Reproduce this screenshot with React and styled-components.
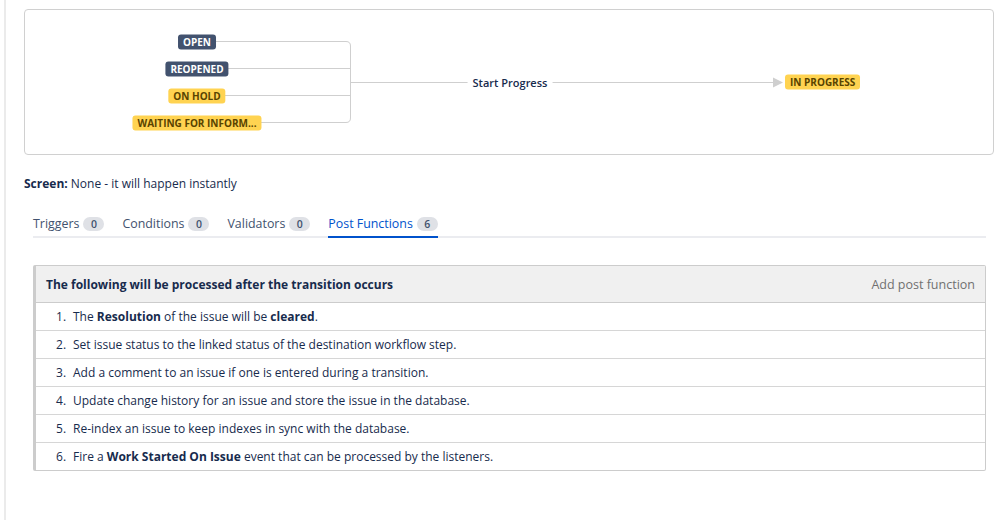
import React from 'react';
import styled, { createGlobalStyle } from 'styled-components';

const GlobalStyle = createGlobalStyle`
  html, body {
    margin: 0;
    padding: 0;
    background: #fff;
  }
  body {
    font-family: "Open Sans", "Noto Sans", sans-serif;
    font-size: 12px;
    color: #172b4d;
  }
`;

const Page = styled.div`
  margin-left: 4px;
  border-left: 2px solid #ebebeb;
  min-height: 520px;
  box-sizing: border-box;
  padding: 9px 5px 0 18px;
`;

const DiagramBox = styled.div`
  position: relative;
  width: 970px;
  height: 146px;
  box-sizing: border-box;
  border: 1px solid #d0d0d0;
  border-radius: 4px;
`;

const Lines = styled.svg`
  position: absolute;
  left: 0;
  top: 0;
`;

const Lozenge = styled.span`
  position: absolute;
  left: ${(p) => p.$x}px;
  top: ${(p) => p.$y}px;
  transform: ${(p) => (p.$center ? 'translate(-50%, -50%)' : 'translateY(-50%)')};
  display: inline-block;
  padding: 0 5px;
  height: 15px;
  line-height: 15px;
  border-radius: 3px;
  font-size: 10px;
  font-weight: 700;
  white-space: nowrap;
  background: ${(p) => (p.$tone === 'blue' ? '#42526e' : '#ffd351')};
  color: ${(p) => (p.$tone === 'blue' ? '#fff' : '#594300')};
`;

const EdgeLabel = styled.span`
  position: absolute;
  left: ${(p) => p.$x}px;
  top: ${(p) => p.$y}px;
  transform: translate(-50%, -50%);
  background: #fff;
  padding: 0 5px;
  font-size: 11px;
  font-weight: 600;
  color: #172b4d;
  white-space: nowrap;
`;

const ScreenLine = styled.p`
  margin: 21px 0 0;
  font-size: 12px;
  line-height: 16px;
  b {
    font-weight: 700;
  }
`;

const TabBar = styled.div`
  display: flex;
  gap: 18px;
  margin: 23px 0 0 9px;
  width: 953px;
  border-bottom: 2px solid #ebecf0;
`;

const Tab = styled.div`
  display: flex;
  align-items: center;
  gap: 4px;
  padding: 0 0 4px;
  margin-bottom: -2px;
  font-size: 12.4px;
  color: ${(p) => (p.$active ? '#0052cc' : '#42526e')};
  border-bottom: 2px solid ${(p) => (p.$active ? '#0052cc' : 'transparent')};
`;

const Count = styled.span`
  display: inline-block;
  min-width: 21px;
  height: 14px;
  line-height: 14px;
  text-align: center;
  border-radius: 7px;
  background: #dfe1e6;
  color: #42526e;
  font-size: 10.5px;
  font-weight: 600;
`;

const Panel = styled.section`
  margin: 27px 0 0 9px;
  width: 953px;
  box-sizing: border-box;
  border: 1px solid #cccccc;
  border-left: 3px solid #cccccc;
  border-radius: 2px;
`;

const PanelHeader = styled.div`
  display: flex;
  align-items: center;
  justify-content: space-between;
  height: 36px;
  padding: 0 10px 0 10px;
  background: #f0f0f0;
  border-bottom: 1px solid #cccccc;
`;

const PanelTitle = styled.h3`
  margin: 0;
  font-size: 12px;
  font-weight: 700;
  color: #172b4d;
`;

const AddLink = styled.span`
  font-size: 12.5px;
  color: #707070;
`;

const StepList = styled.ol`
  list-style: none;
  margin: 0;
  padding: 0;
`;

const Step = styled.li`
  display: flex;
  align-items: center;
  height: 27px;
  padding-left: 20px;
  border-top: ${(p) => (p.$first ? 'none' : '1px solid #d6d6d6')};
  font-size: 12px;
  color: #172b4d;
  b {
    font-weight: 700;
  }
`;

const StepNo = styled.span`
  width: 17px;
  flex: none;
`;

const sources = [
  { label: 'OPEN', tone: 'blue', y: 31 },
  { label: 'REOPENED', tone: 'blue', y: 58 },
  { label: 'ON HOLD', tone: 'yellow', y: 85 },
  { label: 'WAITING FOR INFORM...', tone: 'yellow', y: 112 },
];

const steps = [
  <>The <b>Resolution</b> of the issue will be <b>cleared</b>.</>,
  <>Set issue status to the linked status of the destination workflow step.</>,
  <>Add a comment to an issue if one is entered during a transition.</>,
  <>Update change history for an issue and store the issue in the database.</>,
  <>Re-index an issue to keep indexes in sync with the database.</>,
  <>Fire a <b>Work Started On Issue</b> event that can be processed by the listeners.</>,
];

const tabs = [
  { name: 'Triggers', count: 0 },
  { name: 'Conditions', count: 0 },
  { name: 'Validators', count: 0 },
  { name: 'Post Functions', count: 6, active: true },
];

export default function App() {
  return (
    <>
      <GlobalStyle />
      <Page>
        <DiagramBox>
          <Lines width="968" height="144" viewBox="0 0 968 144">
            <g fill="none" stroke="#cfcfcf" strokeWidth="1">
              <path d="M172 31.5 H321 Q325.5 31.5 325.5 36 V108 Q325.5 112.5 321 112.5 H172" />
              <path d="M172 58.5 H325.5" />
              <path d="M172 85.5 H325.5" />
              <path d="M325.5 72.5 H750" />
            </g>
            <polygon points="748,67.5 758,72.5 748,77.5" fill="#cfcfcf" />
          </Lines>
          {sources.map((s) => (
            <Lozenge key={s.label} $tone={s.tone} $x={172} $y={s.y + 0.5} $center>
              {s.label}
            </Lozenge>
          ))}
          <EdgeLabel $x={485} $y={72}>Start Progress</EdgeLabel>
          <Lozenge $tone="yellow" $x={760} $y={72}>IN PROGRESS</Lozenge>
        </DiagramBox>

        <ScreenLine>
          <b>Screen:</b> None - it will happen instantly
        </ScreenLine>

        <TabBar>
          {tabs.map((t) => (
            <Tab key={t.name} $active={t.active}>
              {t.name}
              <Count>{t.count}</Count>
            </Tab>
          ))}
        </TabBar>

        <Panel>
          <PanelHeader>
            <PanelTitle>The following will be processed after the transition occurs</PanelTitle>
            <AddLink>Add post function</AddLink>
          </PanelHeader>
          <StepList>
            {steps.map((s, i) => (
              <Step key={i} $first={i === 0}>
                <StepNo>{i + 1}.</StepNo>
                <span>{s}</span>
              </Step>
            ))}
          </StepList>
        </Panel>
      </Page>
    </>
  );
}
